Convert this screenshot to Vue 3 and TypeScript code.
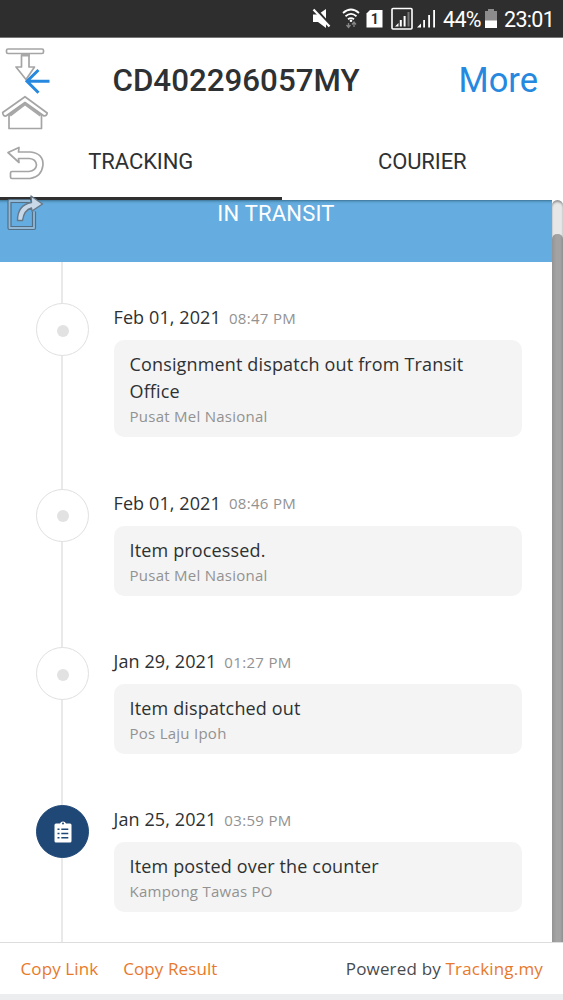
<script setup lang="ts">
interface TrackingEvent {
  date: string
  time: string
  title: string
  place: string
  posted?: boolean
}

const events: TrackingEvent[] = [
  { date: 'Feb 01, 2021', time: '08:47 PM', title: 'Consignment dispatch out from Transit Office', place: 'Pusat Mel Nasional' },
  { date: 'Feb 01, 2021', time: '08:46 PM', title: 'Item processed.', place: 'Pusat Mel Nasional' },
  { date: 'Jan 29, 2021', time: '01:27 PM', title: 'Item dispatched out', place: 'Pos Laju Ipoh' },
  { date: 'Jan 25, 2021', time: '03:59 PM', title: 'Item posted over the counter', place: 'Kampong Tawas PO', posted: true },
]
</script>

<template>
  <div class="screen">
    <div class="status">
      <svg class="status-icons" width="128" height="37" viewBox="310 0 128 37">
        <path d="M313 14.500h5l8-5.500v19l-8-6h-5z" fill="#fff" />
        <path d="M315 8l16 18" stroke="#2e2e2e" stroke-width="2.500" />
        <path d="M313.500 9.500l16 17" stroke="#fff" stroke-width="2.200" />
        <g fill="none" stroke="#fff" stroke-width="1.800">
          <path d="M343 13q8-7 16 0" />
          <path d="M345.500 16.200q5.500-4.600 11 0" />
          <path d="M348 19.300q3-2.400 6 0" />
        </g>
        <circle cx="351" cy="20.800" r="1.300" fill="#fff" />
        <path d="M348.500 27v-4m-2 2l2 2.500 2-2.500M354 27v-4.500m-2 2l2-2.500 2 2.500" fill="none" stroke="#858585" stroke-width="1.300" />
        <path d="M370 10h12.500v17.500h-16V13.500z" fill="#fff" />
        <text class="sim" x="374.500" y="23.500" text-anchor="middle">1</text>
        <rect x="392" y="8.500" width="20" height="20.500" rx="1" fill="none" stroke="#fff" stroke-width="1.600" />
        <path d="M395 26.500l3.500-3.500v3.500zM399.800 20h2v6.500h-2zM403.600 16h2v10.500h-2z" fill="#fff" />
        <path d="M407.500 12h2v14.500h-2z" fill="#777" />
        <path d="M417 27.500l4-4v4zM423.200 20h1.800v7.500h-1.800zM428.200 15h1.800v12.500h-1.800zM433.200 10h1.800v17.500h-1.800z" fill="#fff" />
      </svg>
      <span class="percent">44%</span>
      <svg class="battery" width="12" height="20" viewBox="0 0 12 20">
        <path d="M0 2h3V0h6v2h3v10H0z" fill="#8c8c8c" />
        <path d="M0 11.500h12V19H0z" fill="#fff" />
      </svg>
      <span class="clock">23:01</span>
    </div>

    <header class="header">
      <span class="number">CD402296057MY</span>
      <span class="more">More</span>
    </header>
    <nav class="tabs">
      <span class="tab active">TRACKING</span>
      <span class="tab">COURIER</span>
    </nav>

    <main class="body">
      <div class="content">
        <div class="banner"><span>IN TRANSIT</span></div>
        <section class="timeline">
          <article v-for="event in events" :key="event.date + event.time" class="event">
            <div class="marker" :class="{ posted: event.posted }">
              <svg v-if="event.posted" width="18" height="24" viewBox="0 0 18 24">
                <path d="M2 3.500h4a3.200 3.200 0 0 1 6 0h4q1.500 0 1.500 1.500v16q0 1.500-1.500 1.500H2Q.5 22.500.5 21V5Q.5 3.500 2 3.500z" fill="#fff" />
                <circle cx="9" cy="3.600" r="1" fill="#1f4877" />
                <path d="M3.500 9.200h2m1.800 0h7M3.500 13.500h2m1.800 0h7M3.500 17.800h2m1.800 0h7" stroke="#1f4877" stroke-width="1.400" />
              </svg>
              <i v-else class="dot"></i>
            </div>
            <div class="details">
              <div class="when"><span class="date">{{ event.date }}</span><span class="time">{{ event.time }}</span></div>
              <div class="card">
                <div class="title">{{ event.title }}</div>
                <div class="place">{{ event.place }}</div>
              </div>
            </div>
          </article>
        </section>
      </div>
      <div class="scrollbar"><div class="thumb"></div></div>
    </main>

    <footer class="footer">
      <a class="link">Copy Link</a>
      <a class="link result">Copy Result</a>
      <span class="powered">Powered by <a>Tracking.my</a></span>
    </footer>

    <svg class="overlay" width="60" height="196" viewBox="0 38 60 196" fill="none">
      <g stroke="#a5a5a5" stroke-width="1.700" stroke-linejoin="round" fill="#fff">
        <rect x="6.500" y="49" width="37" height="4.500" rx="1.500" />
        <path d="M21.500 55h7.500v12h5.500L26 79.500 16 67h5.500z" />
        <path d="M9 115L25 102.500 41.500 115v13.500H9z" />
        <path d="M25 96.700L2.700 112.500q.3 4 3.300 3.500L25 102.500l19 13.500q3-.2 3.200-3z" />
        <path d="M8 152.500l11-5-.5 4.500h12q13 1.500 12.500 13-1.500 12-13 13.500H12q-1.500 0-1.500-1.500v-4q0-1.500 1.500-1.500h17q7-1 7.500-6.500-.5-6-7-6.500H18.500l.5 4z" />
      </g>
      <path d="M21 55.300h9M10 115.500l15-11.500 15.500 11.500" stroke="#a8a8a8" stroke-width="2.500" />
      <path d="M49.500 81.200H27M38.500 70L27 81.200l11.500 11.500" stroke="#2688df" stroke-width="3" />
      <g stroke-linejoin="round">
        <path d="M30 202.500H9.500v27h24.500V213" stroke="#526f86" stroke-width="4.200" transform="translate(0 -1.500)" />
        <path d="M30 202.500H9.500v27h24.500V213" stroke="#91b9d7" stroke-width="1.800" transform="translate(0 -1.500)" />
        <path d="M17.500 220.500q0-15.500 14-18l-.5-6.500 11.500 8-10.500 7-.5-3q-7.500 2-9 12.500z" fill="#c8d8e9" stroke="#667888" stroke-width="1.400" />
      </g>
    </svg>
  </div>
</template>

<style>
body { margin: 0; }
</style>

<style scoped>
.screen {
  position: relative;
  width: 563px;
  height: 1000px;
  overflow: hidden;
  background: #fff;
  color: #2e3133;
  font-family: "Open Sans", "Noto Sans", sans-serif;
  display: flex;
  flex-direction: column;
}
.screen span, .screen a { white-space: nowrap; }
.status {
  flex: none;
  height: 37px;
  border-bottom: 1px solid #777;
  background: #2e2e2e;
  color: #fff;
  font: 21.500px/39px Roboto, sans-serif;
  letter-spacing: -.7px;
  display: flex;
  align-items: flex-start;
}
.status-icons { margin-left: 310px; flex: none; }
.sim { font: bold 14px Roboto, sans-serif; fill: #2e2e2e; }
.percent { width: 37px; margin-left: 5px; }
.battery { margin: 9px 7px 0 5px; flex: none; }
.header {
  flex: none;
  height: 85px;
  padding: 0 25px 0 112.500px;
  display: flex;
  align-items: center;
  justify-content: space-between;
  font-family: Roboto, sans-serif;
}
.number { font-size: 31.300px; font-weight: 500; }
.more { font-size: 34.500px; color: #2688df; padding-bottom: 2px; }
.tabs {
  flex: none;
  height: 77px;
  display: flex;
  font: 22px/77px Roboto, sans-serif;
}
.tab { flex: 1; text-align: center; box-sizing: border-box; letter-spacing: -.1px; }
.tab.active { border-bottom: 3px solid #303030; }
.body { flex: none; height: 742px; display: flex; }
.content { width: 552px; overflow: hidden; }
.banner {
  height: 62px;
  box-sizing: border-box;
  background: linear-gradient(#3f789c, #5ba0cf 2px, #65ade0 4px);
  color: #fff;
  text-align: center;
  font: 22px/27px Roboto, sans-serif;
  letter-spacing: .2px;
}
.timeline {
  position: relative;
  padding: 41px 30px 0 36px;
}
.timeline::before {
  content: "";
  position: absolute;
  left: 61px;
  top: 0;
  width: 2px;
  height: 680px;
  background: #e9e9e9;
}
.event { display: flex; padding-bottom: 51.400px; }
.event:first-child { padding-bottom: 51.700px; }
.marker {
  position: relative;
  flex: none;
  width: 53px;
  height: 53px;
  box-sizing: border-box;
  margin-right: 24.500px;
  border: 1.500px solid #e0e0e0;
  border-radius: 50%;
  background: #fff;
  display: flex;
  align-items: center;
  justify-content: center;
}
.marker.posted { background: #1f4877; border-color: #1f4877; }
.dot { width: 12px; height: 12px; margin-top: 2px; border-radius: 50%; background: #e2e2e2; }
.details { flex: 1; }
.when { height: 37px; line-height: 28px; display: flex; align-items: baseline; }
.date { font-size: 18px; letter-spacing: .1px; }
.time { margin-left: 8px; font-size: 15px; letter-spacing: .32px; color: #929292; position: relative; top: -.5px; }
.card { padding: 11px 16px 10px; border-radius: 10px; background: #f4f4f4; }
.title { font-size: 18px; letter-spacing: .15px; line-height: 27px; }
.place { font-size: 15px; letter-spacing: .26px; line-height: 22px; color: #929292; }
.scrollbar {
  width: 11px;
  box-sizing: border-box;
  padding-top: 34px;
  border-radius: 6px 6px 0 0;
  background: #e7e7e7;
  box-shadow: inset 0 2px 2px #999;
}
.thumb { height: 708px; border-radius: 5px 5px 0 0; background: linear-gradient(90deg, #949494, #a3a3a3 40%, #a3a3a3 75%, #8f8f8f); }
.footer {
  flex: none;
  height: 52px;
  box-sizing: border-box;
  border-top: 1px solid #ddd;
  box-shadow: 0 6px #ebedef;
  padding: 0 20px 0 20.500px;
  display: flex;
  align-items: center;
  font-size: 17px;
  letter-spacing: .1px;
}
.footer a { color: #e8792b; }
.result { margin-left: 25px; }
.powered { margin-left: auto; color: #484b4e; letter-spacing: .18px; }
.overlay { position: absolute; left: 0; top: 38px; }
</style>
